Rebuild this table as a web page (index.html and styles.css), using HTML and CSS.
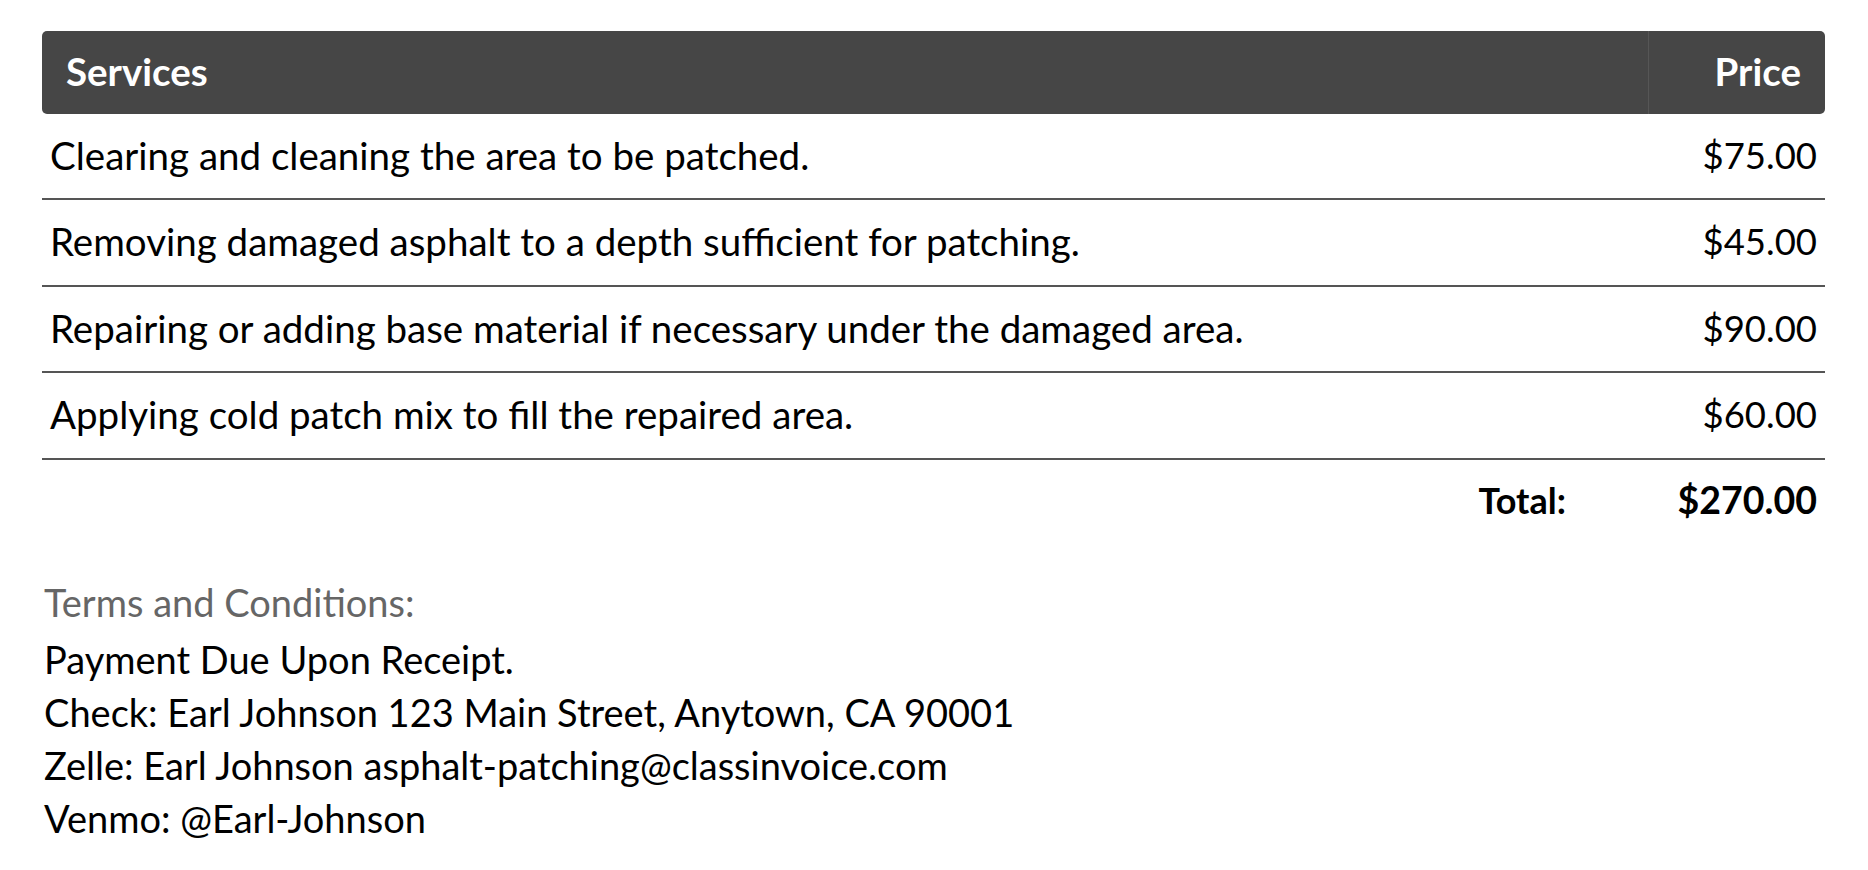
FILE: index.html
```html
<!DOCTYPE html>
<html lang="en">
<head>
<meta charset="utf-8">
<title>Invoice Services</title>
<link rel="stylesheet" href="styles.css">
</head>
<body>
<main class="page">
  <section class="services">
    <div class="head">
      <div class="head-cell head-desc">Services</div>
      <div class="head-cell head-price">Price</div>
    </div>
    <div class="row">
      <div class="desc">Clearing and cleaning the area to be patched.</div>
      <div class="price">$75.00</div>
    </div>
    <div class="row">
      <div class="desc">Removing damaged asphalt to a depth sufficient for patching.</div>
      <div class="price">$45.00</div>
    </div>
    <div class="row">
      <div class="desc">Repairing or adding base material if necessary under the damaged area.</div>
      <div class="price">$90.00</div>
    </div>
    <div class="row">
      <div class="desc">Applying cold patch mix to fill the repaired area.</div>
      <div class="price">$60.00</div>
    </div>
    <div class="total">
      <div class="total-label">Total:</div>
      <div class="total-value">$270.00</div>
    </div>
  </section>
  <section class="terms">
    <div class="terms-title">Terms and Conditions:</div>
    <div class="terms-line">Payment Due Upon Receipt.</div>
    <div class="terms-line">Check: Earl Johnson 123 Main Street, Anytown, CA 90001</div>
    <div class="terms-line">Zelle: Earl Johnson asphalt-patching@classinvoice.com</div>
    <div class="terms-line">Venmo: @Earl-Johnson</div>
  </section>
</main>
</body>
</html>
```
FILE: styles.css
```css
html, body {
  margin: 0;
  padding: 0;
  background: #ffffff;
}

body {
  font-family: "Lato", "Open Sans", sans-serif;
  color: #000000;
}

.page {
  padding: 31px 43px 0 42px;
}

.services {
  display: flex;
  flex-direction: column;
}

.head {
  display: grid;
  grid-template-columns: 1fr 177px;
  height: 83px;
  background: #464646;
  border-radius: 5px;
  color: #ffffff;
  font-weight: 700;
  font-size: 38.5px;
}

.head-cell {
  display: flex;
  align-items: center;
  padding-bottom: 3px;
}

.head-desc {
  padding-left: 24px;
}

.head-price {
  justify-content: flex-end;
  padding-right: 24px;
  border-left: 1px solid #565656;
}

.row {
  display: grid;
  grid-template-columns: 1fr 177px;
  height: 84px;
  align-items: center;
  border-bottom: 2px solid #555555;
  font-size: 38.5px;
}

.row + .row {
  height: 84.5px;
}

.desc {
  padding-left: 8px;
  padding-bottom: 2px;
}

.price {
  text-align: right;
  padding-right: 8px;
  padding-bottom: 2px;
  font-size: 36.5px;
}

.total {
  display: grid;
  grid-template-columns: 1fr 177px;
  height: 80px;
  align-items: center;
  font-weight: 700;
  font-size: 37.5px;
}

.total-label {
  text-align: right;
  padding-right: 82px;
  font-size: 36px;
}

.total-value {
  text-align: right;
  padding-right: 8px;
}

.terms {
  margin-top: 35px;
  padding-left: 2px;
  font-size: 38px;
}

.terms-title {
  color: #666666;
  line-height: 54px;
  margin-bottom: 4px;
}

.terms-line {
  line-height: 53px;
}
```
